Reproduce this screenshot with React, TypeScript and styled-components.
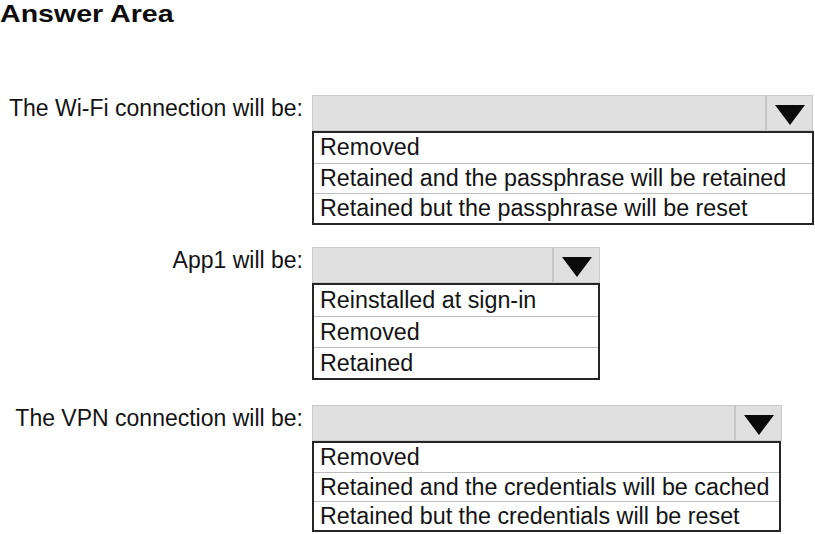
import React from "react";
import styled, { createGlobalStyle } from "styled-components";

const Global = createGlobalStyle`
  html, body { margin: 0; padding: 0; background: #ffffff; }
  body { font-family: "Liberation Sans", Arial, sans-serif; color: #111; }
`;

const Page = styled.div`
  width: 815px;
  height: 534px;
  overflow: hidden;
  display: flex;
  flex-direction: column;
`;

const Heading = styled.h1`
  margin: 0 0 67px 0;
  font-size: 24px;
  line-height: 28px;
  font-weight: 700;
  color: #0d0d0d;
  transform: scaleX(1.19);
  transform-origin: left center;
  white-space: nowrap;
`;

const Question = styled.div<{ $top: number }>`
  display: grid;
  grid-template-columns: 312px auto;
  margin-top: ${(p) => p.$top}px;
`;

const Label = styled.div`
  padding-right: 9px;
  text-align: right;
  font-size: 23px;
  line-height: 27px;
  white-space: nowrap;
  color: #141414;
`;

const Control = styled.div<{ $w: number }>`
  display: flex;
  flex-direction: column;
  width: ${(p) => p.$w}px;
`;

const Select = styled.div`
  height: 36px;
  box-sizing: border-box;
  display: flex;
  background: #e0e0e0;
  border: 1px solid #cacaca;
`;

const SelectValue = styled.div`
  flex: 1;
`;

const ArrowCell = styled.div`
  width: 47px;
  display: flex;
  align-items: center;
  justify-content: center;
  padding-top: 3px;
  box-sizing: border-box;
  border-left: 2px solid #c6c6c6;
`;

const List = styled.div<{ $w: number }>`
  display: flex;
  flex-direction: column;
  box-sizing: border-box;
  width: ${(p) => p.$w}px;
  background: #fff;
  border: 2px solid #262626;
`;

const Item = styled.div<{ $h: number }>`
  height: ${(p) => p.$h}px;
  box-sizing: border-box;
  padding-left: 6px;
  font-size: 23.3px;
  line-height: ${(p) => p.$h - 1}px;
  white-space: nowrap;
  color: #141414;
  & + & {
    border-top: 1px solid #bdbdbd;
  }
`;

const Arrow = () => (
  <svg width="30" height="20" viewBox="0 0 30 20">
    <polygon points="0,0 30,0 15,20" fill="#0a0a0a" />
  </svg>
);

type Q = {
  label: string;
  width: number;
  listWidth: number;
  rowH: number;
  top: number;
  options: string[];
};

const questions: Q[] = [
  {
    label: "The Wi-Fi connection will be:",
    width: 501,
    listWidth: 502,
    rowH: 30,
    top: 0,
    options: [
      "Removed",
      "Retained and the passphrase will be retained",
      "Retained but the passphrase will be reset",
    ],
  },
  {
    label: "App1 will be:",
    width: 288,
    listWidth: 288,
    rowH: 31,
    top: 22,
    options: ["Reinstalled at sign-in", "Removed", "Retained"],
  },
  {
    label: "The VPN connection will be:",
    width: 470,
    listWidth: 469,
    rowH: 29,
    top: 25,
    options: [
      "Removed",
      "Retained and the credentials will be cached",
      "Retained but the credentials will be reset",
    ],
  },
];

export default function App() {
  return (
    <Page>
      <Global />
      <Heading>Answer Area</Heading>
      {questions.map((q) => (
        <Question key={q.label} $top={q.top}>
          <Label>{q.label}</Label>
          <Control $w={q.width}>
            <Select>
              <SelectValue />
              <ArrowCell>
                <Arrow />
              </ArrowCell>
            </Select>
            <List $w={q.listWidth}>
              {q.options.map((o) => (
                <Item key={o} $h={q.rowH}>
                  {o}
                </Item>
              ))}
            </List>
          </Control>
        </Question>
      ))}
    </Page>
  );
}
